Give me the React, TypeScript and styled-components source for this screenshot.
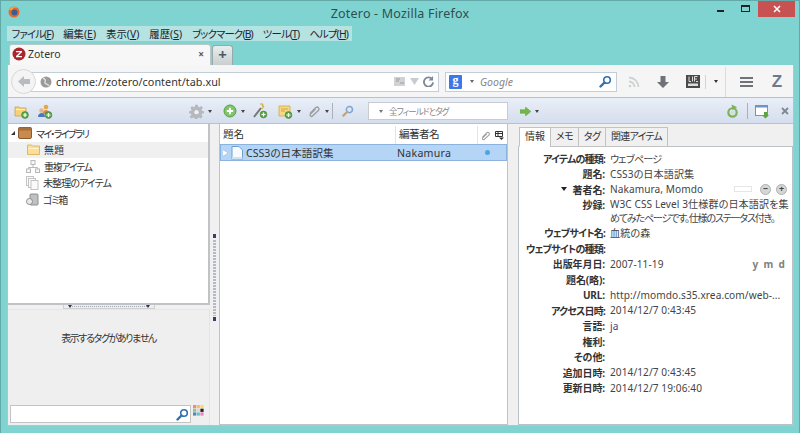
import React from "react";
import styled, { createGlobalStyle } from "styled-components";

const Global = createGlobalStyle`
  html, body { margin: 0; padding: 0; width: 800px; height: 433px; overflow: hidden; }
  body { font-family: "Noto Sans", "Noto Sans CJK JP", sans-serif; font-size: 11px; color: #333; font-feature-settings: "palt"; }
  * { box-sizing: border-box; }
`;
const Frame = styled.div`
  width: 800px; height: 433px; background: #7fd4d2; border: 1px solid #62a9a8; border-bottom: 0;
  display: flex; flex-direction: column; overflow: hidden;
`;
const TitleBar = styled.div`
  height: 25px; display: grid; grid-template-columns: 113px 1fr 120px; align-items: start; padding-left: 7px;
`;
const Logo = styled.div`display: flex; padding-top: 5px;`;
const Title = styled.div`
  text-align: center; font-size: 12.5px; line-height: 25px; color: #2f4f50; letter-spacing: .2px;
  font-family: "Noto Sans", sans-serif; white-space: nowrap;
`;
const WinButtons = styled.div`display: flex; justify-content: flex-end; padding-right: 4px;`;
const WinBtn = styled.div<{ $close?: boolean }>`
  width: ${p => (p.$close ? "37px" : "25px")}; height: 16px;
  background: ${p => (p.$close ? "#c85252" : "transparent")}; display: flex; align-items: center; justify-content: center;
`;
const MenuBar = styled.div`
  margin-left: 5.5px; width: 345px; height: 15px; background: #b4e3e1; display: flex; align-items: center;
  padding-left: 5px; gap: 10px; font-size: 10.4px; color: #223; white-space: nowrap;
`;
const MenuItem = styled.span<{ $kana: boolean }>`
  letter-spacing: ${p => (p.$kana ? "-.85px" : "0")};
  u { text-decoration: underline; }
`;
const TabStrip = styled.div`height: 24px; padding: 4px 0 0 8px; display: flex; align-items: flex-end; gap: 1px;`;
const Tab = styled.div`
  width: 202px; height: 21px; background: #f7f7f7; border: 1px solid #b5c9c9; border-bottom: 0;
  border-radius: 3px 3px 0 0; display: flex; align-items: center; padding: 0 6px 2px 2px; gap: 2px; font-size: 10.5px; color: #333;
`;
const TabLabel = styled.span`flex: 1;`;
const TabClose = styled.span`font-size: 10px; color: #555; font-weight: 700;`;
const NewTab = styled.div`
  width: 21px; height: 20px; background: linear-gradient(#e8ecec, #c9cfcf); border: 1px solid #97aaaa; border-bottom: 0;
  border-radius: 3px 3px 0 0; text-align: center; line-height: 17px; font-size: 15px; font-weight: 700; color: #4c5a66;
`;
const Client = styled.div`
  flex: 1; margin: 0 5px 7px 6px; display: flex; flex-direction: column; background: #f0f0f0; border: 1px solid #b9c3c7; border-top: 0;
  min-height: 0;
`;
const NavBar = styled.div`
  height: 33px; background: #f5f5f5; border-bottom: 1px solid #bcc0c3; display: flex; align-items: center; padding: 1px 0 0 3px;
`;
const BackBtn = styled.div`
  width: 25px; height: 25px; flex: none; border-radius: 50%; background: #f4f4f4; border: 1px solid #d8d8d8; display: flex; align-items: center; justify-content: center;
  margin-right: -6px; z-index: 1; position: relative;
`;
const UrlBox = styled.div`
  width: 409px; flex: none; height: 20px; background: #fff; border: 1px solid #c3ced9; border-left-color: #d8d8d8; display: flex; align-items: center; padding: 0 4px 0 9px; gap: 4px;
  font-size: 10.8px; color: #333; font-family: "Noto Sans", sans-serif; letter-spacing: .03px;
`;
const UrlText = styled.span`flex: 1;`;
const SearchBox = styled.div`
  margin-left: 6px; width: 172px; flex: none; height: 20px; background: #fff; border: 1px solid #c3ced9; display: flex; align-items: center; padding: 0 4px 0 3px; gap: 4px;
  font-size: 10.5px; font-style: italic; color: #888;
`;
const SearchText = styled.span`flex: 1; margin-left: 2px;`;
const GBadge = styled.span`
  width: 13px; height: 14px; background: #3b78e7; color: #fff; font-size: 12px; font-style: normal; font-weight: 700; text-align: center; line-height: 11px; border-radius: 1px; font-family: "Liberation Serif", serif;
`;
const NavIcons = styled.div`flex: 1; display: flex; align-items: center; padding-left: 6px; height: 100%;`;
const NavIcon = styled.div<{ $w: number }>`width: ${p => p.$w}px; flex: none; display: flex; justify-content: center; align-items: center;`;
const NavSep = styled.div`width: 1px; height: 30px; background: #dcdcdc; margin-left: 4px;`;
const MiniSep = styled.div`width: 1px; height: 14px; background: #d4d4d4;`;
const ZMark = styled.span`font-family: "Liberation Sans", sans-serif; font-weight: 700; font-size: 17px; color: #6d7a8c; line-height: 1;`;
const Toolbar = styled.div`
  height: 26px; background: linear-gradient(#e9eff8, #d5deed); border-bottom: 1px solid #b9c1cc; display: flex; align-items: center; padding-top: 1px;
`;
const ToolSpring = styled.div`flex: 1;`;
const ToolIcon = styled.div<{ $ml?: number }>`display: flex; align-items: center; margin-left: ${p => p.$ml ?? 0}px; height: 16px; flex: none;`;
const Caret = styled.span<{ $c?: string }>`
  display: inline-block; width: 0; height: 0; border: 2.5px solid transparent; border-top: 3px solid ${p => p.$c ?? "#444"}; border-bottom: 0; margin-left: 4px;
`;
const CreatorCaret = styled.span`
  width: 0; height: 0; border: 3.5px solid transparent; border-top: 4px solid #222; border-bottom: 0; margin-right: 6px;
`;
const ToolSep = styled.div<{ $ml: number }>`width: 1px; height: 16px; background: #a8b0bb; margin-left: ${p => p.$ml}px; flex: none;`;
const QuickSearch = styled.div`
  margin-left: 14px; width: 140px; flex: none; height: 18px; background: #fff; border: 1px solid #c8ccd0; display: flex; align-items: center; padding-left: 6px; gap: 6px;
  font-size: 8.6px; color: #888;
`;
const QuickText = styled.span`letter-spacing: -1px;`;
const Panes = styled.div`flex: 1; display: flex; min-height: 0;`;
const LeftCol = styled.div`width: 202px; flex: none; display: flex; flex-direction: column;`;
const Collections = styled.div`height: 181px; background: #fff; border-right: 2px solid #c0c2c5; border-bottom: 2px solid #c0c2c5; padding-top: 1px;`;
const CollRow = styled.div<{ $sel?: boolean; $indent?: number; $ls?: number }>`
  height: 16.5px; display: flex; align-items: center; padding-left: ${p => p.$indent ?? 0}px; gap: 4px; font-size: 10px; color: #333;
  background: ${p => (p.$sel ? "#f0f0f0" : "transparent")}; letter-spacing: ${p => p.$ls ?? 0}px;
`;
const Twisty = styled.span`width: 0; height: 0; border-left: 4px solid transparent; border-bottom: 4px solid #333; margin-right: -1px;`;
const HGrip = styled.div`height: 4px; display: flex; justify-content: center;`;
const GripBar = styled.div`
  width: 92px; height: 4px; background: #eceef0 repeating-linear-gradient(90deg, #a4abb6 0 1px, transparent 1px 2px) no-repeat center 1px / 78px 1px;
  border: 1px solid #d0d0d0; border-top: 0;
  display: flex; justify-content: space-between; padding: 0 4px; align-items: flex-start;
`;
const GripArrow = styled.span`width: 0; height: 0; border: 2px solid transparent; border-top: 3px solid #334; border-bottom: 0;`;
const TagPane = styled.div`
  flex: 1; background: #efefef; border-top: 1px solid #e6e6e6; border-right: 1px solid #e4e4e4; display: flex; flex-direction: column;
`;
const NoTags = styled.div`flex: 1; text-align: center; font-size: 10px; padding-top: 20px; color: #333; letter-spacing: -1.4px;`;
const TagFooter = styled.div`height: 20px; display: flex; align-items: flex-start; padding-left: 2px; gap: 2px;`;
const TagInput = styled.div`
  width: 181px; height: 18px; background: #fff; border: 1px solid #c4c4c4; display: flex; justify-content: flex-end; align-items: center; padding-right: 1px;
`;
const VSplit = styled.div<{ $w: number }>`
  width: ${p => p.$w}px; flex: none; background: #f0f0f0; display: flex; flex-direction: column; align-items: center; padding-top: 105px;
`;
const VGrip = styled.div`
  width: 4px; height: 93px; display: flex; flex-direction: column; justify-content: space-between; align-items: center; padding: 5px 0 1px;
  background: repeating-linear-gradient(#b6bac8 0 2px, transparent 2px 3px) no-repeat center 11px / 3px 76px;
`;
const VGripMark = styled.span`width: 3px; height: 4px; background: #3c3c6e;`;
const Center = styled.div`width: 289px; flex: none; background: #fff; border-left: 1px solid #c0c2c5; border-right: 1px solid #c0c2c5; border-bottom: 1px solid #c0c2c5; display: flex; flex-direction: column;`;
const ListHead = styled.div`height: 20px; display: flex; align-items: center; font-size: 10.6px; color: #333; background: #fff; padding-top: 2px;`;
const ColTitle = styled.div`width: 176px; padding-left: 3px; border-right: 1px solid #e3e3e3; height: 100%; line-height: 16px;`;
const ColAuthor = styled.div`width: 82px; padding-left: 3px; border-right: 1px solid #e3e3e3; height: 100%; line-height: 16px; letter-spacing: -.6px;`;
const ColIcon = styled.div`flex: 1; display: flex; align-items: center; justify-content: center;`;
const ListRow = styled.div`
  height: 17px; background: #b5d5f7; border: 1px solid #8cb2de; display: flex; align-items: center; font-size: 10.6px; color: #333;
`;
const RowTitle = styled.div`width: 176px; display: flex; align-items: center; gap: 3px; padding-left: 2px; white-space: nowrap;`;
const RowAuthor = styled.div`width: 88px; font-family: "Noto Sans", sans-serif; letter-spacing: .25px;`;
const Dot = styled.span`width: 5px; height: 5px; border-radius: 50%; background: #4aa6e4;`;
const RowTwisty = styled.span`width: 0; height: 0; border: 3.5px solid transparent; border-left: 5px solid #fff; border-right: 0; filter: drop-shadow(0 0 .6px #567);`;
const Right = styled.div`flex: 1; min-width: 0; display: flex; flex-direction: column; padding-top: 3px;`;
const TabRow = styled.div`height: 20px; display: flex; padding-left: 1px; margin-bottom: -1px; z-index: 1; position: relative;`;
const DTab = styled.div<{ $on?: boolean; $w: number; $ls?: number }>`
  width: ${p => p.$w}px; height: 20px; background: ${p => (p.$on ? "#fff" : "#f0f0f0")};
  border: 1px solid #c2c2c2; ${p => (p.$on ? "border-bottom-color:#fff;" : "")} margin-right: -1px; text-align: center; font-size: 10px; line-height: 17px; color: #333; letter-spacing: ${p => p.$ls ?? 0}px;
`;
const DetailPanel = styled.div`flex: 1; background: #fff; border: 1px solid #b9c3c7; padding-top: 3.5px; display: grid; grid-template-columns: 86px 1fr; align-items: start; column-gap: 5px; align-content: start;`;
const Label = styled.div<{ $kana?: boolean }>`
  height: 15.5px; font-weight: 700; font-size: 10px; color: #333; white-space: nowrap; letter-spacing: ${p => (p.$kana ? "-.8px" : "-.1px")}; display: flex; justify-content: flex-end; align-items: center;
`;
const Value = styled.div<{ $ls?: number }>`
  height: 15.5px; font-size: 10.1px; color: #444; white-space: nowrap; letter-spacing: ${p => p.$ls ?? 0.08}px; padding-right: 3px; display: flex; align-items: center; justify-content: space-between;
`;
const Abstract = styled.div`height: 28px; font-size: 10.1px; color: #444; line-height: 14px; white-space: nowrap; letter-spacing: .08px;`;
const AbstractLine2 = styled.span`letter-spacing: -1.25px;`;
const Ymd = styled.span`font-weight: 700; color: #808080; letter-spacing: 1.3px; font-size: 10px; margin-right: 3px;`;
const Creator = styled.span`display: flex; align-items: center; gap: 5px; margin-right: 2px;`;
const Small = styled.span`width: 18px; height: 6px; border: 1px solid #e6e6e6; margin-right: 3px;`;
const Round = styled.span`width: 11px; height: 11px; border-radius: 50%; background: #d6d6d6; border: 1px solid #b0b0b0; color: #444; font-size: 9px; line-height: 8px; text-align: center; font-weight: 700;`;
const Lang = styled.span`color: #45407a;`;

const Plus = ({ x, y }: { x: number; y: number }) => (
  <g>
    <circle cx={x} cy={y} r="3.4" fill="#5aa84a" stroke="#3f7f33" strokeWidth=".6" />
    <path d={`M${x - 2} ${y}h4M${x} ${y - 2}v4`} stroke="#fff" strokeWidth="1.2" />
  </g>
);
const FolderAdd = () => (
  <svg width="15" height="15" viewBox="0 0 15 15">
    <path d="M1 3h4l1 1h6v8H1z" fill="#f5d27a" stroke="#c8a24e" strokeWidth=".8" />
    <path d="M2 5h9v1H2z" fill="#fff2c4" />
    <Plus x={11} y={11} />
  </svg>
);
const GroupAdd = () => (
  <svg width="16" height="15" viewBox="0 0 16 15">
    <circle cx="9" cy="3" r="2.3" fill="#e7a44c" />
    <path d="M5.5 10c0-3 2-4 3.500-4s3.500 1 3.500 4z" fill="#d98b3a" />
    <circle cx="4.500" cy="6.500" r="2.300" fill="#e8b48c" />
    <path d="M1 13c0-3 2-4 3.500-4s3.500 1 3.500 4z" fill="#4a78c0" />
    <Plus x={11.500} y={11} />
  </svg>
);
const Gear = () => (
  <svg width="15" height="15" viewBox="0 0 24 24">
    <path d="M10 1h4l.6 3 2.400 1 2.600-1.700 2.800 2.800L20 8.700l1 2.400 3 .6v3l-3 .6-1 2.400 1.700 2.600-2.800 2.800-2.600-1.700-2.400 1-.6 2.600h-4l-.6-2.600-2.400-1-2.600 1.700-2.800-2.800L4 17.700l-1-2.400-3-.6v-3l3-.6 1-2.400-1.700-2.600 2.800-2.800L7 5l2.400-1z" fill="#b5b8bc" />
    <circle cx="12" cy="13" r="3.500" fill="#eef0f3" />
  </svg>
);
const GreenPlus = () => (
  <svg width="14" height="14" viewBox="0 0 14 14">
    <circle cx="7" cy="7" r="6" fill="#7fc56a" stroke="#5a9e48" />
    <path d="M3.800 7h6.400M7 3.800v6.400" stroke="#fff" strokeWidth="2" />
  </svg>
);
const WandAdd = () => (
  <svg width="16" height="16" viewBox="0 0 16 16">
    <path d="M2 14 9 5" stroke="#777" strokeWidth="2" />
    <path d="M8 1h3l-1 2h2l-2 3" fill="none" stroke="#d9a030" strokeWidth="1" />
    <Plus x={11.500} y={11.500} />
  </svg>
);
const NoteAdd = () => (
  <svg width="15" height="15" viewBox="0 0 15 15">
    <path d="M1 2h11v10H1z" fill="#f7d77f" stroke="#d1a94e" strokeWidth=".8" />
    <path d="M3 5h7M3 7h4" stroke="#c99a3c" strokeWidth=".8" />
    <Plus x={10.500} y={11} />
  </svg>
);
const Clip = ({ s = 14 }: { s?: number }) => (
  <svg width={s} height={s} viewBox="0 0 14 14">
    <path d="M3 9.500 8.800 3.500a2 2 0 0 1 2.800 2.800L5.500 12a1.300 1.300 0 0 1-2-2l5-5" fill="none" stroke="#9a9da1" strokeWidth="1.300" />
  </svg>
);
const Glass = ({ c = "#2f6fb0", s = 13, h = "#2f6fb0" }: { c?: string; s?: number; h?: string }) => (
  <svg width={s} height={s} viewBox="0 0 13 13">
    <circle cx="8" cy="5" r="3.300" fill="none" stroke={c} strokeWidth="1.600" />
    <path d="M5.500 7.500 1.500 11.500" stroke={h} strokeWidth="2.400" strokeLinecap="round" />
  </svg>
);
const GreenArrow = () => (
  <svg width="11" height="9" viewBox="0 0 12 10"><path d="M0 3h6V0l6 5-6 5V7H0z" fill="#74b648" stroke="#5a9a38" strokeWidth=".5" /></svg>
);
const Sync = () => (
  <svg width="13" height="15" viewBox="0 0 14 15">
    <circle cx="7" cy="8.500" r="4.500" fill="none" stroke="#7db35a" strokeWidth="2.400" />
    <path d="M6 0l6 3-5 3z" fill="#7db35a" />
    <circle cx="7" cy="8.500" r="2" fill="#cfe5bf" />
  </svg>
);
const PaneIcon = () => (
  <svg width="15" height="15" viewBox="0 0 15 15">
    <rect x=".5" y="1.500" width="12" height="10" fill="#fff" stroke="#6f94c4" />
    <rect x=".5" y="1.500" width="12" height="2" fill="#6f94c4" />
    <path d="M9 8h3v3h2l-3.500 3.500L7 11h2z" fill="#5ea33f" />
  </svg>
);
const FolderPlain = () => (
  <svg width="13" height="11" viewBox="0 0 13 11">
    <path d="M.5 1h4l1 1h7v8.500H.5z" fill="#fbdf96" stroke="#dcb867" />
    <path d="M1.500 4h10v1h-10z" fill="#fff3cf" />
  </svg>
);
const Library = () => (
  <svg width="14" height="12" viewBox="0 0 14 12">
    <rect x="0.500" y=".5" width="13" height="11" rx="1.500" fill="#c98a4e" stroke="#8a5a2c" />
    <rect x="0.500" y=".5" width="13" height="3" fill="#a56f3c" />
  </svg>
);
const Dupes = () => (
  <svg width="14" height="13" viewBox="0 0 14 13" fill="none" stroke="#b9b9b9">
    <rect x="5" y=".5" width="4" height="4" fill="#f6f6f6" />
    <path d="M7 4.500v3M2.500 9.500v-2h9v2" />
    <rect x=".5" y="9" width="4" height="3.500" fill="#f6f6f6" />
    <rect x="9.500" y="9" width="4" height="3.500" fill="#f6f6f6" />
  </svg>
);
const Unfiled = () => (
  <svg width="13" height="14" viewBox="0 0 13 14" stroke="#c4c4c4" fill="#fafafa">
    <rect x=".5" y=".5" width="7" height="9" />
    <rect x="2.500" y="2.500" width="7" height="9" />
    <rect x="5" y="4.500" width="7" height="9" />
  </svg>
);
const Trash = () => (
  <svg width="13" height="13" viewBox="0 0 13 13">
    <rect x="4" y="1" width="8" height="11" rx="1" fill="#bfc0c2" stroke="#8d8e90" />
    <circle cx="3.500" cy="8.500" r="3" fill="#e9e9e9" stroke="#8d8e90" />
  </svg>
);
const Doc = () => (
  <svg width="12" height="14" viewBox="0 0 12 14">
    <path d="M1 .5h7l3.500 3.500v9.500H1z" fill="#f7fbff" stroke="#6f9fd0" />
    <path d="M1 11h10.500v2.500H1z" fill="#cfe2f6" />
  </svg>
);
const ColorGrid = () => (
  <svg width="11" height="11" viewBox="0 0 11 11">
    {["#f08a7a","#f5b87a","#f3dc6e","#8fc98a","#d9d9d9","#222","#5a80c0","#60c8c0","#f080c0"].map((c, i) => (
      <rect key={i} x={(i % 3) * 3.700} y={Math.floor(i / 3) * 3.700} width="3.200" height="3.200" fill={c} />
    ))}
  </svg>
);

const menus: [string, string, boolean][] = [["ファイル", "F", true], ["編集", "E", false], ["表示", "V", false], ["履歴", "S", false], ["ブックマーク", "B", true], ["ツール", "T", true], ["ヘルプ", "H", true]];
const lower: [string, string, boolean][] = [
  ["題名(略):", "", false],
  ["URL:", "http://momdo.s35.xrea.com/web-...", false],
  ["アクセス日時:", "2014/12/7 0:43:45", true],
];
const tail: [string, string][] = [
  ["権利:", ""],
  ["その他:", ""],
  ["追加日時:", "2014/12/7 0:43:45"],
  ["更新日時:", "2014/12/7 19:06:40"],
];

export default function App() {
  return (
    <Frame>
      <Global />
      <TitleBar>
        <Logo>
          <svg width="12" height="12" viewBox="0 0 12 12">
            <circle cx="6" cy="6" r="5.500" fill="#e8682a" />
            <circle cx="6.500" cy="6.500" r="3" fill="#3c5c92" />
            <path d="M1 4c2-4 7-4 9-2-3-1-5 0-6 2z" fill="#f2a53a" />
          </svg>
        </Logo>
        <Title>Zotero - Mozilla Firefox</Title>
        <WinButtons>
          <WinBtn><svg width="8" height="8"><rect y="5" width="7" height="2" fill="#222" /></svg></WinBtn>
          <WinBtn><svg width="10" height="8"><rect x=".5" y=".5" width="8" height="6" fill="none" stroke="#222" /><rect width="9" height="2" fill="#222" /></svg></WinBtn>
          <WinBtn $close><svg width="8" height="8"><path d="M1 1l6 6M7 1 1 7" stroke="#fff" strokeWidth="1.500" /></svg></WinBtn>
        </WinButtons>
      </TitleBar>
      <MenuBar>
        {menus.map(([n, k, kana]) => (
          <MenuItem key={n} $kana={kana}>{n}(<u>{k}</u>)</MenuItem>
        ))}
      </MenuBar>
      <TabStrip>
        <Tab>
          <svg width="14" height="14" viewBox="0 0 14 14"><circle cx="7" cy="7" r="6.500" fill="#a8262c" /><path d="M4 4h6v1.200L6 9h4v1.200H4V9l4-3.800H4z" fill="#fff" /></svg>
          <TabLabel>Zotero</TabLabel>
          <TabClose>×</TabClose>
        </Tab>
        <NewTab>+</NewTab>
      </TabStrip>
      <Client>
        <NavBar>
          <BackBtn>
            <svg width="12" height="11" viewBox="0 0 12 11"><path d="M6 0v3h6v5H6v3L0 5.500z" fill="#b8bcc0" /></svg>
          </BackBtn>
          <UrlBox>
            <svg width="12" height="12" viewBox="0 0 12 12"><circle cx="6" cy="6" r="5.500" fill="#9a9a9a" /><path d="M3 2c2 1 3 2 2 4s3 2 4 4" fill="none" stroke="#dcdcdc" strokeWidth="1.500" /></svg>
            <UrlText>chrome://zotero/content/tab.xul</UrlText>
            <svg width="12" height="10" viewBox="0 0 12 10"><rect width="11" height="9" fill="#d0d2d4" /><path d="M2 2h4M2 4h3M6 6h4" stroke="#9a9da0" /></svg>
            <svg width="9" height="7" viewBox="0 0 9 7"><path d="M0 0h9L4.500 7z" fill="#c8ccd0" /></svg>
            <svg width="11" height="11" viewBox="0 0 12 12"><path d="M10 3.500A5 5 0 1 0 11 7" fill="none" stroke="#7d8896" strokeWidth="2" /><path d="M11 0v5H6z" fill="#7d8896" /></svg>
          </UrlBox>
          <SearchBox>
            <GBadge>g</GBadge>
            <Caret $c="#666" />
            <SearchText>Google</SearchText>
            <Glass />
          </SearchBox>
          <NavIcons>
            <NavIcon $w={22}>
              <svg width="12" height="12" viewBox="0 0 12 12" fill="none" stroke="#cfd2d4" strokeWidth="1.800"><circle cx="2" cy="10" r="1.300" fill="#cfd2d4" stroke="none" /><path d="M1 5.500a5.500 5.500 0 0 1 5.500 5.500M1 1.500a9.500 9.500 0 0 1 9.500 9.500" /></svg>
            </NavIcon>
            <NavIcon $w={36}>
              <svg width="12" height="12" viewBox="0 0 12 12"><path d="M3.500 0h5v6H12l-6 6-6-6h3.500z" fill="#6f7276" /></svg>
            </NavIcon>
            <NavIcon $w={24}>
              <svg width="14" height="13" viewBox="0 0 14 13"><rect width="14" height="13" fill="#4a4a4a" /><path d="M3 1.500v5h2M6.500 1.500v5M8.500 1.500v5M8.500 1.500h3M8.500 4h2.500M10 6.500h2" stroke="#ddd" strokeWidth="1" fill="none" /><rect x="2" y="8.500" width="10" height="2.500" fill="#ddd" /></svg>
            </NavIcon>
            <MiniSep />
            <NavIcon $w={15}><Caret $c="#333" /></NavIcon>
            <NavSep />
            <NavIcon $w={40}>
              <svg width="13" height="10" viewBox="0 0 13 10"><path d="M0 1h13M0 5h13M0 9h13" stroke="#6f7276" strokeWidth="2" /></svg>
            </NavIcon>
            <NavIcon $w={22}><ZMark>Z</ZMark></NavIcon>
          </NavIcons>
        </NavBar>
        <Toolbar>
          <ToolIcon $ml={6}><FolderAdd /></ToolIcon>
          <ToolIcon $ml={8}><GroupAdd /></ToolIcon>
          <ToolIcon $ml={136}><Gear /><Caret /></ToolIcon>
          <ToolIcon $ml={11}><GreenPlus /><Caret /></ToolIcon>
          <ToolIcon $ml={7}><WandAdd /></ToolIcon>
          <ToolIcon $ml={10}><NoteAdd /><Caret /></ToolIcon>
          <ToolIcon $ml={6}><Clip /><Caret /></ToolIcon>
          <ToolSep $ml={3} />
          <ToolIcon $ml={9}><Glass c="#7da6d6" h="#c9a46a" s={12} /></ToolIcon>
          <QuickSearch><Caret $c="#777" /><QuickText>全フィールドとタグ</QuickText></QuickSearch>
          <ToolIcon $ml={12}><GreenArrow /><Caret /></ToolIcon>
          <ToolSpring />
          <ToolIcon><Sync /></ToolIcon>
          <ToolSep $ml={8} />
          <ToolIcon $ml={7}><PaneIcon /></ToolIcon>
          <ToolIcon $ml={9}>
            <svg width="14" height="16" viewBox="0 0 14 16"><path d="M3 5l6 6M9 5l-6 6" stroke="#7d8896" strokeWidth="1.800" /></svg>
          </ToolIcon>
        </Toolbar>
        <Panes>
          <LeftCol>
            <Collections>
              <CollRow $indent={3} $ls={-1.7}><Twisty /><Library />マイ・ライブラリ</CollRow>
              <CollRow $sel $indent={19}><FolderPlain /><span>無題</span></CollRow>
              <CollRow $indent={18} $ls={-1.3}><Dupes />重複アイテム</CollRow>
              <CollRow $indent={18} $ls={-.9}><Unfiled />未整理のアイテム</CollRow>
              <CollRow $indent={18} $ls={-1.2}><Trash />ゴミ箱</CollRow>
            </Collections>
            <HGrip><GripBar><GripArrow /><GripArrow /></GripBar></HGrip>
            <TagPane>
              <NoTags>表示するタグがありません</NoTags>
              <TagFooter>
                <TagInput><Glass /></TagInput>
                <ColorGrid />
              </TagFooter>
            </TagPane>
          </LeftCol>
          <VSplit $w={9}><VGrip><VGripMark /><VGripMark /></VGrip></VSplit>
          <Center>
            <ListHead>
              <ColTitle>題名</ColTitle>
              <ColAuthor>編著者名</ColAuthor>
              <ColIcon><Clip s={11} /></ColIcon>
              <ColIcon>
                <svg width="9" height="9" viewBox="0 0 9 9"><path d="M.5.500h7v5h-7zM.5 2.500h7M3 .5v5" fill="none" stroke="#333" /><path d="M4 6.500h5L6.500 9z" fill="#333" /></svg>
              </ColIcon>
            </ListHead>
            <ListRow>
              <RowTitle><RowTwisty /><Doc />CSS3の日本語訳集</RowTitle>
              <RowAuthor>Nakamura</RowAuthor>
              <Dot />
            </ListRow>
          </Center>
          <VSplit $w={10} />
          <Right>
            <TabRow>
              <DTab $on $w={32}>情報</DTab>
              <DTab $w={29} $ls={-.5}>メモ</DTab>
              <DTab $w={28} $ls={-.5}>タグ</DTab>
              <DTab $w={63} $ls={-.8}>関連アイテム</DTab>
            </TabRow>
            <DetailPanel>
              <Label $kana>アイテムの種類:</Label><Value $ls={-.8}>ウェブページ</Value>
              <Label>題名:</Label><Value>CSS3の日本語訳集</Value>
              <Label><CreatorCaret />著者名:</Label>
              <Value>Nakamura, Momdo<Creator><Small /><Round>−</Round><Round>+</Round></Creator></Value>
              <Label>抄録:</Label>
              <Abstract>W3C CSS Level 3仕様群の日本語訳を集<br /><AbstractLine2>めてみたページです。仕様のステータス付き。</AbstractLine2></Abstract>
              <Label $kana>ウェブサイト名:</Label><Value>血統の森</Value>
              <Label $kana>ウェブサイトの種類:</Label><Value />
              <Label>出版年月日:</Label><Value>2007-11-19<Ymd>y m d</Ymd></Value>
              {lower.map(([l, v, k]) => [<Label key={l} $kana={k}>{l}</Label>, <Value key={l + "v"}>{v}</Value>])}
              <Label>言語:</Label><Value><Lang>ja</Lang></Value>
              {tail.map(([l, v]) => [<Label key={l}>{l}</Label>, <Value key={l + "v"}>{v}</Value>])}
            </DetailPanel>
          </Right>
        </Panes>
      </Client>
    </Frame>
  );
}
